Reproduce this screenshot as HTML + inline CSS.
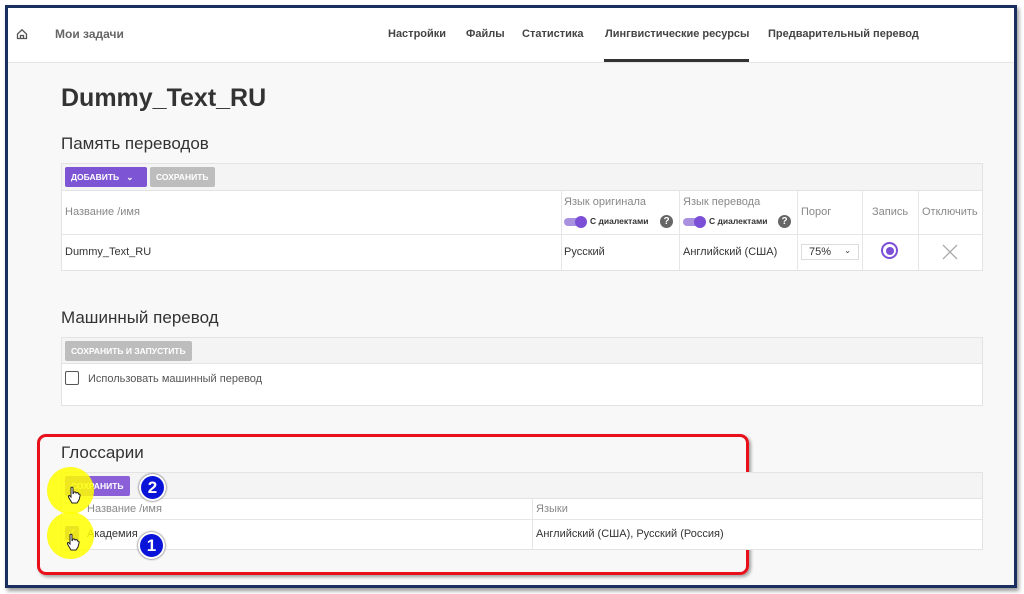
<!DOCTYPE html>
<html><head><meta charset="utf-8"><style>
*{box-sizing:border-box;margin:0;padding:0}
body{width:1024px;height:594px;background:#fff;font-family:"Liberation Sans",sans-serif;position:relative;overflow:hidden;color:#333}
.a{position:absolute}
.frame{left:5px;top:5px;width:1012px;height:583px;border:3px solid #1b2f5e;background:#f8f8f8;box-shadow:2px 3px 4px rgba(0,0,0,.4)}
.hdr{left:8px;top:8px;width:1006px;height:55px;background:#fff;border-bottom:1px solid #e6e6e6}
.nav{font-size:11px;font-weight:bold;color:#444;top:28px}
.tbl{background:#fff;border:1px solid #e3e3e3}
.tb{background:#f4f4f4;border-bottom:1px solid #e3e3e3}
.btn{font-size:8.5px;font-weight:bold;color:#fff;height:20px;line-height:20px;padding:0 6px;border-radius:2px}
.h2{font-size:17px;color:#333}
.th{font-size:11px;color:#888}
.td{font-size:11px;color:#333}
.vl{width:1px;background:#e6e6e6}
.tog{width:22px;height:8px;border-radius:4px;background:#a991e0}
.tog::after{content:"";position:absolute;right:-1px;top:-2px;width:12px;height:12px;border-radius:50%;background:#7b4fd6}
.q{width:13px;height:13px;border-radius:50%;background:#666;color:#fff;font-size:10px;font-weight:bold;text-align:center;line-height:13px}
.badge{width:27px;height:27px;border-radius:50%;background:#0a14d8;border:2px solid #fff;box-shadow:0 0 2px #333;color:#fff;font-weight:bold;font-size:17px;text-align:center;line-height:23px}
</style></head><body>
<div class="a frame"></div>
<div class="a hdr"></div>
<svg class="a" style="left:16px;top:28px" width="12" height="12" viewBox="0 0 12 12"><path d="M1.5 6 L6 1.8 L10.5 6 V10.5 H1.5 Z M4.5 10.5 V7.5 H7.5 V10.5" fill="none" stroke="#555" stroke-width="1.3"/></svg>
<div class="a nav" style="left:55px;color:#666;font-size:12px;top:27px">Мои задачи</div>
<div class="a nav" style="left:388px">Настройки</div>
<div class="a nav" style="left:466px">Файлы</div>
<div class="a nav" style="left:522px">Статистика</div>
<div class="a nav" style="left:605px">Лингвистические ресурсы</div>
<div class="a" style="left:604px;top:59px;width:145px;height:3px;background:#333"></div>
<div class="a nav" style="left:768px">Предварительный перевод</div>

<div class="a" style="left:61px;top:84px;font-size:25px;font-weight:bold;color:#333">Dummy_Text_RU</div>
<div class="a h2" style="left:61px;top:134px">Память переводов</div>
<div class="a tbl" style="left:61px;top:163px;width:922px;height:108px"></div>
<div class="a tb" style="left:62px;top:164px;width:920px;height:27px"></div>
<div class="a btn" style="left:65px;top:167px;width:82px;background:#7d55d4">ДОБАВИТЬ &nbsp;&nbsp;⌄</div>
<div class="a btn" style="left:150px;top:167px;background:#bdbdbd">СОХРАНИТЬ</div>
<div class="a" style="left:62px;top:234px;width:920px;height:1px;background:#e6e6e6"></div>
<div class="a vl" style="left:561px;top:191px;height:79px"></div>
<div class="a vl" style="left:679px;top:191px;height:79px"></div>
<div class="a vl" style="left:797px;top:191px;height:79px"></div>
<div class="a vl" style="left:862px;top:191px;height:79px"></div>
<div class="a vl" style="left:918px;top:191px;height:79px"></div>
<div class="a th" style="left:65px;top:206px">Название /имя</div>
<div class="a th" style="left:564px;top:196px">Язык оригинала</div>
<div class="a tog" style="left:564px;top:218px"></div>
<div class="a" style="left:590px;top:216px;font-size:8.5px;font-weight:bold">С диалектами</div>
<div class="a q" style="left:660px;top:215px">?</div>
<div class="a th" style="left:683px;top:196px">Язык перевода</div>
<div class="a tog" style="left:683px;top:218px"></div>
<div class="a" style="left:709px;top:216px;font-size:8.5px;font-weight:bold">С диалектами</div>
<div class="a q" style="left:778px;top:215px">?</div>
<div class="a th" style="left:801px;top:206px">Порог</div>
<div class="a th" style="left:872px;top:206px">Запись</div>
<div class="a th" style="left:922px;top:206px">Отключить</div>
<div class="a td" style="left:65px;top:246px">Dummy_Text_RU</div>
<div class="a td" style="left:564px;top:246px">Русский</div>
<div class="a td" style="left:683px;top:246px">Английский (США)</div>
<div class="a" style="left:801px;top:244px;width:58px;height:16px;border:1px solid #ddd;font-size:11px;padding:1px 7px">75% <span style="float:right;font-size:8px">⌄</span></div>
<div class="a" style="left:881px;top:242px;width:17px;height:17px;border-radius:50%;border:2px solid #7b4fd6"><div style="margin:2.5px;width:8px;height:8px;border-radius:50%;background:#7b4fd6"></div></div>
<svg class="a" style="left:942px;top:244px" width="16" height="16"><path d="M1 1L15 15M15 1L1 15" stroke="#aaa" stroke-width="1.3"/></svg>

<div class="a h2" style="left:61px;top:308px">Машинный перевод</div>
<div class="a tbl" style="left:61px;top:337px;width:922px;height:69px"></div>
<div class="a tb" style="left:62px;top:338px;width:920px;height:26px"></div>
<div class="a btn" style="left:65px;top:341px;background:#bdbdbd">СОХРАНИТЬ И ЗАПУСТИТЬ</div>
<div class="a" style="left:65px;top:371px;width:14px;height:14px;border:1.5px solid #555;border-radius:2px"></div>
<div class="a td" style="left:88px;top:373px;color:#555">Использовать машинный перевод</div>

<div class="a" style="left:37px;top:434px;width:712px;height:141px;border:3px solid #e8101a;border-radius:9px;box-shadow:2px 2px 3px rgba(0,0,0,.35)"></div>
<div class="a h2" style="left:61px;top:443px">Глоссарии</div>
<div class="a tbl" style="left:61px;top:472px;width:922px;height:78px"></div>
<div class="a tb" style="left:62px;top:473px;width:920px;height:26px"></div>
<div class="a btn" style="left:65px;top:476px;background:#8a5fd8">СОХРАНИТЬ</div>
<div class="a" style="left:62px;top:519px;width:920px;height:1px;background:#e6e6e6"></div>
<div class="a vl" style="left:532px;top:499px;height:50px"></div>
<div class="a th" style="left:87px;top:503px">Название /имя</div>
<div class="a th" style="left:536px;top:503px">Языки</div>
<div class="a td" style="left:87px;top:528px">Академия</div>
<div class="a td" style="left:536px;top:528px">Английский (США), Русский (Россия)</div>
<div class="a" style="left:65px;top:526px;width:14px;height:14px;background:#7b4fd6;border-radius:2px;color:#fff;font-size:11px;line-height:14px;text-align:center">✓</div>
<div class="a" style="left:47px;top:467px;width:47px;height:47px;border-radius:50%;background:rgba(255,255,0,.85)"></div>
<div class="a" style="left:47px;top:512px;width:47px;height:47px;border-radius:50%;background:rgba(255,255,0,.85)"></div>
<svg class="a" style="left:67px;top:486px" width="14" height="18" viewBox="0 0 14 18"><path d="M4 1.5 Q5.5 0.5 6 2 V8 L7 6 Q8.5 5.5 9 7 L10 6.5 Q11.5 6.5 11.5 8 L12 8 Q13.5 8.5 13 10 L12 14 L10 17 H5 L1.5 11 Q1 9.5 2.5 9.5 L4 11 Z" fill="#fff" stroke="#222" stroke-width="1"/></svg>
<svg class="a" style="left:66px;top:533px" width="14" height="18" viewBox="0 0 14 18"><path d="M4 1.5 Q5.5 0.5 6 2 V8 L7 6 Q8.5 5.5 9 7 L10 6.5 Q11.5 6.5 11.5 8 L12 8 Q13.5 8.5 13 10 L12 14 L10 17 H5 L1.5 11 Q1 9.5 2.5 9.5 L4 11 Z" fill="#fff" stroke="#222" stroke-width="1"/></svg>
<div class="a badge" style="left:139px;top:474px">2</div>
<div class="a badge" style="left:138px;top:532px">1</div>
</body></html>
